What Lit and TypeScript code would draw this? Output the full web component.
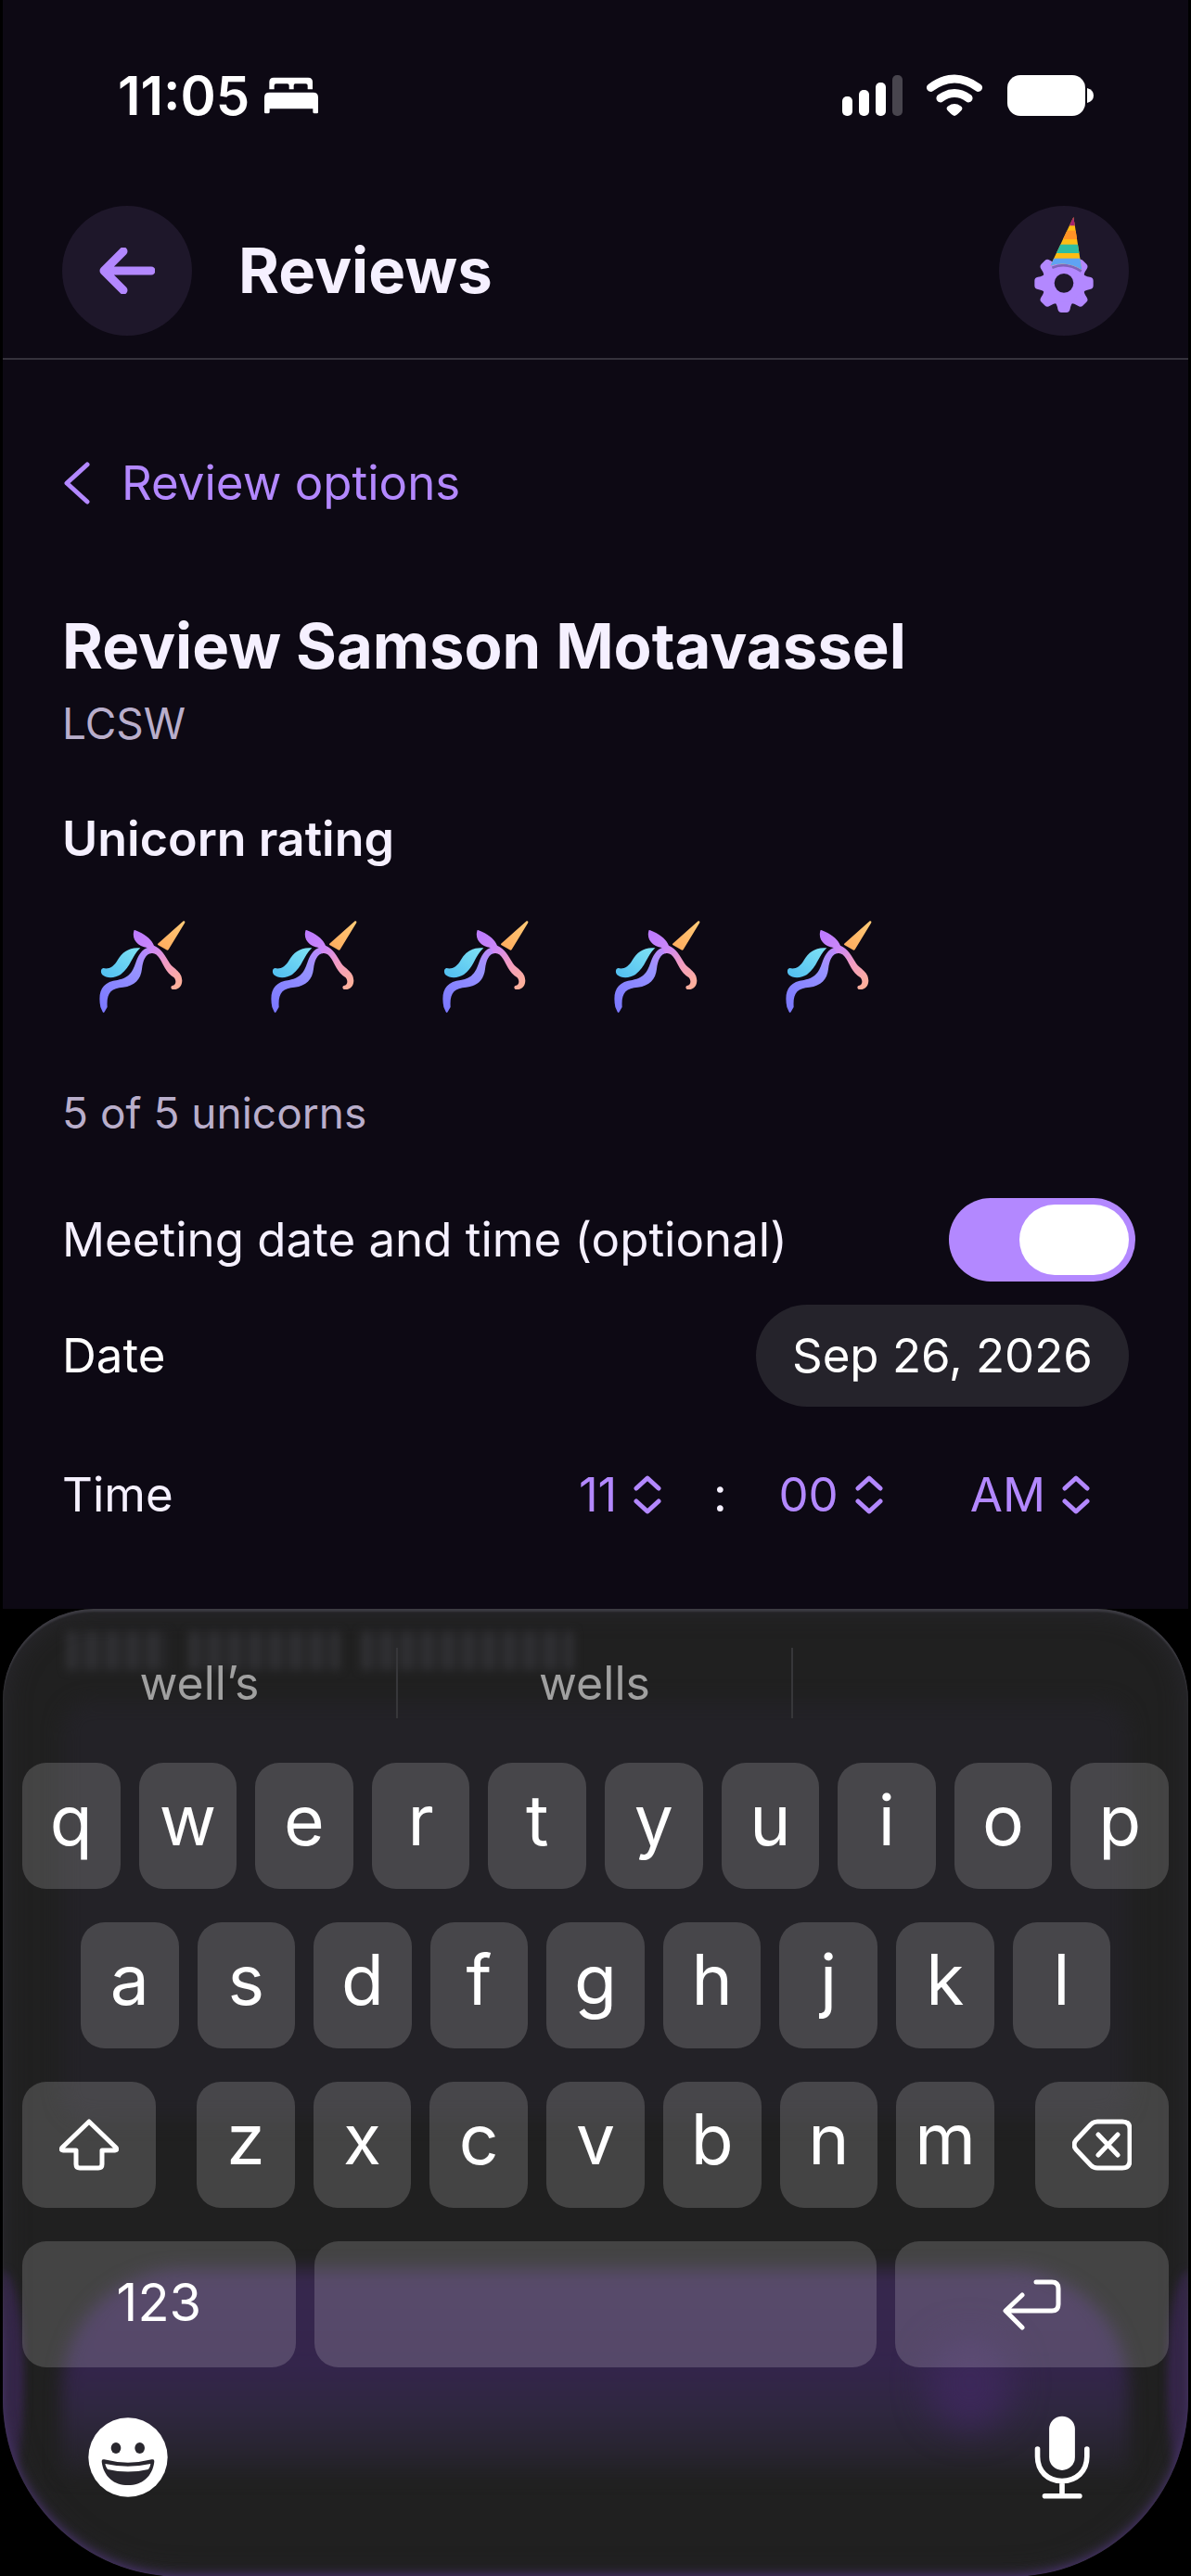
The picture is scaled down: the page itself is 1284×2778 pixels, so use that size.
import { LitElement, html, css, svg, nothing } from "lit";
import { customElement, state } from "lit/decorators.js";
import { classMap } from "lit/directives/class-map.js";

const TOP_ROW = [..."qwertyuiop"];
const HOME_ROW = [..."asdfghjkl"];
const BOTTOM_ROW = [..."zxcvbnm"];
const SUGGESTIONS = ["well’s", "wells", ""];
const TEETH = [0, 45, 90, 135, 180, 225, 270, 315];

const hours = Array.from({ length: 12 }, (_, i) => String(i + 1));
const minutes = Array.from({ length: 12 }, (_, i) => String(i * 5).padStart(2, "0"));

const bedIcon = html`
  <svg class="bed" viewBox="0 0 174 120" aria-hidden="true">
    <path d="M16 40V16Q16 2 30 2H142Q156 2 156 16V40H140V28Q140 22 134 22H100Q95 22 95 28V40H80V28Q80 22 74 22H38Q32 22 32 28V40Z" />
    <path d="M0 114V66Q0 50 16 50H158Q174 50 174 66V114Q174 118 170 118H162Q157 118 157 113V103H17V113Q17 118 12 118H4Q0 118 0 114Z" />
  </svg>
`;

const signalIcon = html`
  <svg class="signal" viewBox="0 0 66 46" role="img" aria-label="Signal">
    <rect x="0" y="24" width="11" height="21" rx="5" />
    <rect x="18" y="17" width="11" height="28" rx="5" />
    <rect x="36" y="9" width="11" height="36" rx="5" />
    <rect class="dim" x="54" y="1" width="11" height="44" rx="5" />
  </svg>
`;

const wifiIcon = html`
  <svg class="wifi" viewBox="324 60 186 140" role="img" aria-label="Wi-Fi">
    <path class="arc" d="M339 104Q417 46 495 104" />
    <path class="arc" d="M371 139Q417 106 463 139" />
    <path d="M417 197Q411 197 394 179Q388 170 396 165Q417 150 438 165Q446 170 440 179Q423 197 417 197Z" />
  </svg>
`;

const batteryIcon = html`
  <svg class="battery" viewBox="0 0 93 44" role="img" aria-label="Battery full">
    <rect width="84" height="44" rx="14" />
    <path d="M86 14Q93 16 93 22T86 30Z" />
  </svg>
`;

const gearIcon = html`
  <svg class="gear" viewBox="52 36 420 420" aria-hidden="true">
    <defs>
      <clipPath id="hat"><path d="M293 72L218 230Q272 212 320 243Z" /></clipPath>
    </defs>
    <g class="cog" transform="translate(262 286)">
      <path fill-rule="evenodd" d="M0-70A70 70 0 1 1 0 70A70 70 0 1 1 0-70ZM0-31A31 31 0 1 0 0 31A31 31 0 1 0 0-31Z" />
      ${TEETH.map(
        (a) => svg`<path transform="rotate(${a})" d="M-32-60Q-23-66-20-84Q-18-95-8-95H8Q18-95 20-84Q23-66 32-60Z" />`,
      )}
    </g>
    <path class="hat-shade" d="M224 236Q272 216 318 248" />
    <g clip-path="url(#hat)">
      <rect x="210" y="60" width="120" height="190" fill="#ffbc14" />
      <rect x="210" y="60" width="120" height="40" fill="#a5236e" />
      <rect x="210" y="116" width="120" height="28" fill="#ff9326" />
      <rect x="210" y="161" width="120" height="28" fill="#2ebda0" />
      <rect x="210" y="206" width="120" height="44" fill="#5fa3f3" />
    </g>
  </svg>
`;

const unicornIcon = html`
  <svg class="unicorn" viewBox="80 60 288 309" aria-hidden="true">
    <defs>
      <linearGradient id="u-horn" x1="0" y1="1" x2="1" y2="0">
        <stop offset="0" stop-color="#ffa95c" />
        <stop offset="1" stop-color="#ffcb77" />
      </linearGradient>
      <linearGradient id="u-face" gradientUnits="userSpaceOnUse" x1="205" y1="110" x2="345" y2="275">
        <stop offset="0" stop-color="#bd7bff" />
        <stop offset="0.3" stop-color="#cb88f8" />
        <stop offset="0.6" stop-color="#f19bc4" />
        <stop offset="1" stop-color="#ffb199" />
      </linearGradient>
      <linearGradient id="u-neck" gradientUnits="userSpaceOnUse" x1="100" y1="360" x2="255" y2="150">
        <stop offset="0" stop-color="#7b78ff" />
        <stop offset="0.65" stop-color="#9793ff" />
        <stop offset="1" stop-color="#c486fa" />
      </linearGradient>
      <linearGradient id="u-mane" x1="0" y1="1" x2="1" y2="0">
        <stop offset="0" stop-color="#50bdf0" />
        <stop offset="1" stop-color="#80e3f4" />
      </linearGradient>
    </defs>
    <path fill="url(#u-horn)" d="M355 67Q361 65 360 72L307 159Q304 163 299 159L274 145Q269 142 275 138Z" />
    <path fill="url(#u-mane)" d="M216 154C180 150 157 168 143 192C130 216 112 224 96 219C87 221 87 234 93 241C107 253 134 252 152 240C187 214 186 182 216 154Z" />
    <path fill="url(#u-neck)" d="M262 150C226 148 212 172 203 196C192 228 184 250 142 258C93 263 77 294 87 345L94 361Q97 366 100 361L109 345C106 300 120 284 160 281C198 277 217 256 221 222C224 196 232 170 256 170Z" />
    <path fill="url(#u-face)" d="M195 99Q195 95 200 97C232 110 250 124 260 146C284 156 296 178 308 199C319 221 351 228 351 260C350 280 337 289 323 288C314 288 313 279 319 276C332 274 333 260 325 250C297 232 290 206 279 189C270 174 260 168 248 172L238 153C210 150 187 128 195 99Z" />
  </svg>
`;

const chevrons = html`
  <svg class="chevrons" viewBox="0 0 30 42" aria-hidden="true">
    <path d="M3 14L15 3L27 14M3 28L15 39L27 28" />
  </svg>
`;

@customElement("app-root")
export class AppRoot extends LitElement {
  @state() private rating = 5;
  @state() private hasMeeting = true;

  private renderSelect(name: string, options: string[], selected: string) {
    return html`
      <span class="picker">
        <select aria-label=${name}>
          ${options.map((o) => html`<option ?selected=${o === selected}>${o}</option>`)}
        </select>
        ${chevrons}
      </span>
    `;
  }

  private renderKeys(keys: string[]) {
    return keys.map((k) => html`<button type="button" class="key">${k}</button>`);
  }

  private renderStatusBar() {
    return html`
      <div class="status">
        <span class="clock">11:05</span>
        ${bedIcon}
        <span class="spacer"></span>
        ${signalIcon} ${wifiIcon} ${batteryIcon}
      </div>
    `;
  }

  private renderHeader() {
    return html`
      <header class="header">
        <button type="button" class="round" aria-label="Back">
          <svg class="arrow" viewBox="0 0 60 50" aria-hidden="true">
            <path d="M56 25H6M26 4L5 25L26 46" />
          </svg>
        </button>
        <h1 class="title">Reviews</h1>
        <button type="button" class="round" aria-label="Settings">${gearIcon}</button>
      </header>
    `;
  }

  private renderForm() {
    return html`
      <main class="content">
        <button type="button" class="back-link">
          <svg class="chevron" viewBox="0 0 30 46" aria-hidden="true"><path d="M27 3L5 23L27 43" /></svg>
          Review options
        </button>
        <h2 class="name">Review Samson Motavassel</h2>
        <p class="muted credential">LCSW</p>
        <h3 class="label" id="rating-label">Unicorn rating</h3>
        <div class="rating" role="group" aria-labelledby="rating-label">
          ${[1, 2, 3, 4, 5].map(
            (n) => html`
              <button
                type="button"
                class=${classMap({ rate: true, off: n > this.rating })}
                aria-label=${`${n} unicorns`}
                @click=${() => (this.rating = n)}
              >
                ${unicornIcon}
              </button>
            `,
          )}
        </div>
        <p class="muted">${this.rating} of 5 unicorns</p>
        <div class="row toggle-row">
          <label for="meeting">Meeting date and time (optional)</label>
          <input
            id="meeting"
            class="switch"
            type="checkbox"
            role="switch"
            .checked=${this.hasMeeting}
            @change=${(e: Event) => (this.hasMeeting = (e.target as HTMLInputElement).checked)}
          />
        </div>
        ${this.hasMeeting
          ? html`
              <div class="row date-row">
                <span id="date-label">Date</span>
                <button type="button" class="date" aria-describedby="date-label">Sep 26, 2026</button>
              </div>
              <div class="row time-row">
                <span>Time</span>
                <div class="time" role="group" aria-label="Time">
                  ${this.renderSelect("Hour", hours, "11")}
                  <span class="colon">:</span>
                  ${this.renderSelect("Minute", minutes, "00")}
                  <span class="period">${this.renderSelect("AM or PM", ["AM", "PM"], "AM")}</span>
                </div>
              </div>
            `
          : nothing}
      </main>
    `;
  }

  private renderKeyboard() {
    return html`
      <section class="keyboard" aria-label="Keyboard">
        <div class="backdrop" aria-hidden="true">
          <div class="ghost-label">
            <span class="smudge wide"></span>
            <span class="smudge wider"></span>
            <span class="smudge widest"></span>
          </div>
          <div class="ghost-field"></div>
          <div class="ghost-bar"></div>
          <div class="ghost-tab"></div>
          <div class="glow left"></div>
          <div class="glow right"></div>
          <div class="rim"></div>
        </div>
        <div class="suggestions">
          ${SUGGESTIONS.map((s) => html`<button type="button" class="suggestion" ?disabled=${!s}>${s}</button>`)}
        </div>
        <div class="keys">
          <div class="key-row">${this.renderKeys(TOP_ROW)}</div>
          <div class="key-row home">${this.renderKeys(HOME_ROW)}</div>
          <div class="key-row bottom">
            <button type="button" class="key icon side" aria-label="Shift">
              <svg class="key-icon" viewBox="0 0 64 56" aria-hidden="true">
                <path d="M32 3L61 31Q63 34 60 34H46V49Q46 53 42 53H22Q18 53 18 49V34H4Q1 34 3 31Z" />
              </svg>
            </button>
            <div class="letters">${this.renderKeys(BOTTOM_ROW)}</div>
            <button type="button" class="key icon side" aria-label="Delete">
              <svg class="key-icon" viewBox="0 0 64 56" aria-hidden="true">
                <path d="M27 3H54Q62 3 62 11V45Q62 53 54 53H27Q23 53 20 50L4 33Q0 28 4 23L20 6Q23 3 27 3ZM28 17L49 39M49 17L28 39" />
              </svg>
            </button>
          </div>
          <div class="key-row space-row">
            <button type="button" class="key numbers">123</button>
            <button type="button" class="key" aria-label="Space"></button>
            <button type="button" class="key icon" aria-label="Return">
              <svg class="key-icon" viewBox="0 0 64 56" aria-hidden="true">
                <path d="M36 4H53Q60 4 60 11V28Q60 35 53 35H4M21 18L3 35L21 53" />
              </svg>
            </button>
          </div>
        </div>
        <div class="dock">
          <button type="button" class="plain" aria-label="Emoji">
            <svg class="emoji" viewBox="286 1103 258 258" aria-hidden="true">
              <circle cx="415" cy="1232" r="128" fill="#fff" />
              <ellipse cx="376" cy="1202" rx="16" ry="18" />
              <ellipse cx="453" cy="1202" rx="16" ry="18" />
              <path d="M330 1246Q329 1237 338 1239Q415 1259 492 1239Q501 1237 500 1246C494 1295 460 1322 415 1322S336 1295 330 1246Z" />
              <path fill="#fff" d="M341 1253Q415 1269 488 1253Q487 1264 481 1271Q415 1286 349 1271Q343 1264 341 1253Z" />
            </svg>
          </button>
          <button type="button" class="plain" aria-label="Dictate">
            <svg class="mic" viewBox="226 546 180 272" aria-hidden="true">
              <rect class="capsule" x="274" y="548" width="84" height="176" rx="42" />
              <path d="M236 655V680C236 728 270 759 316 759S397 728 397 680V655M316 759V808M260 808H373" />
            </svg>
          </button>
        </div>
      </section>
    `;
  }

  render() {
    return html`${this.renderStatusBar()} ${this.renderHeader()} ${this.renderForm()} ${this.renderKeyboard()}`;
  }

  static styles = css`
    :host {
      --accent: #b388ff;
      --text: #f5f0ff;
      --muted: #b9aecb;
      --surface: #0d0914;
      display: flex;
      flex-direction: column;
      min-height: 100vh;
      box-sizing: border-box;
      padding: 0 3px;
      background: #000;
      color: var(--text);
      font-family: Inter, "Liberation Sans", sans-serif;
      font-size: 51px;
      line-height: 64px;
    }

    * {
      box-sizing: border-box;
    }

    h1,
    h2,
    h3,
    p {
      margin: 0;
    }

    button,
    select {
      border: none;
      padding: 0;
      background: none;
      color: inherit;
      font: inherit;
      cursor: pointer;
    }

    svg {
      display: block;
      flex-shrink: 0;
    }

    .status {
      display: flex;
      align-items: center;
      height: 206px;
      padding: 0 102px 0 124px;
      background: var(--surface);
      color: #fff;
      fill: #fff;
    }

    .clock {
      font-size: 58px;
      font-weight: 600;
    }

    .spacer {
      flex: 1;
    }

    .bed {
      width: 58px;
      height: 40px;
      margin-left: 16px;
    }

    .signal {
      width: 66px;
      height: 46px;
    }

    .dim {
      fill: #48454e;
    }

    .wifi {
      width: 62px;
      height: 46px;
      margin: 0 26px 0 24px;
    }

    .arc {
      fill: none;
      stroke: #fff;
      stroke-width: 27;
      stroke-linecap: round;
    }

    .battery {
      width: 93px;
      height: 44px;
    }

    .header {
      display: flex;
      align-items: center;
      padding: 16px 64px 24px;
      border-bottom: 2px solid #35323c;
      background: var(--surface);
    }

    .round {
      display: grid;
      place-items: center;
      width: 140px;
      height: 140px;
      border-radius: 50%;
      background: #1e172a;
    }

    .arrow {
      width: 60px;
      height: 50px;
      fill: none;
      stroke: var(--accent);
      stroke-width: 9;
      stroke-linecap: round;
      stroke-linejoin: round;
    }

    .title,
    .name {
      font-size: 67px;
      font-weight: 700;
      line-height: 84px;
    }

    .title {
      flex: 1;
      margin-left: 50px;
    }

    .gear {
      width: 140px;
      height: 140px;
    }

    .cog {
      fill: var(--accent);
    }

    .hat-shade {
      fill: none;
      stroke: #5c4a8c;
      stroke-width: 8;
      opacity: 0.6;
    }

    .content {
      display: flex;
      flex: 1;
      flex-direction: column;
      align-items: stretch;
      padding: 101px 57px 68px 64px;
      background: var(--surface);
    }

    .back-link {
      display: flex;
      align-items: center;
      align-self: flex-start;
      gap: 34px;
      color: var(--accent);
    }

    .chevron {
      width: 30px;
      height: 46px;
      fill: none;
      stroke: var(--accent);
      stroke-width: 5;
      stroke-linecap: round;
      stroke-linejoin: round;
    }

    .name {
      margin-top: 102px;
    }

    .muted {
      color: var(--muted);
      font-size: 46px;
      line-height: 60px;
    }

    .credential {
      margin: 11px 0 63px;
    }

    .label {
      font-size: 52px;
      font-weight: 600;
    }

    .rating {
      display: flex;
      gap: 11px;
      margin: 40px 0 63px;
    }

    .rate {
      display: grid;
      place-items: center;
      width: 174px;
      height: 130px;
    }

    .off {
      opacity: 0.3;
    }

    .unicorn {
      width: 96px;
      height: 103px;
    }

    .row {
      display: flex;
      align-items: center;
      justify-content: space-between;
    }

    .toggle-row {
      margin-top: 62px;
    }

    .switch {
      appearance: none;
      width: 201px;
      height: 90px;
      margin: 0;
      padding: 7px;
      border-radius: 45px;
      background: #39363f;
      cursor: pointer;
    }

    .switch::before {
      content: "";
      display: block;
      width: 118px;
      height: 76px;
      border-radius: 38px;
      background: #fff;
    }

    .switch:checked {
      background: var(--accent);
    }

    .switch:checked::before {
      margin-left: auto;
    }

    .date-row {
      margin-top: 25px;
      padding-right: 7px;
      color: #fff;
    }

    .date {
      height: 110px;
      padding: 0 39px;
      border-radius: 55px;
      background: #25232b;
    }

    .time-row {
      height: 110px;
      margin-top: 40px;
      padding-right: 49px;
    }

    .time {
      display: flex;
      align-items: center;
    }

    .picker {
      display: flex;
      align-items: center;
      gap: 18px;
      color: var(--accent);
    }

    .picker select {
      appearance: none;
      field-sizing: content;
      height: 64px;
    }

    .chevrons {
      width: 30px;
      height: 42px;
      fill: none;
      stroke: var(--accent);
      stroke-width: 5;
      stroke-linecap: round;
      stroke-linejoin: round;
    }

    .colon {
      width: 126px;
      text-align: center;
    }

    .period {
      margin-left: 94px;
    }

    .keyboard {
      position: relative;
      display: flex;
      flex-direction: column;
      color: #fff;
    }

    .backdrop {
      position: absolute;
      inset: 0;
      overflow: hidden;
      border-radius: 98px 98px 192px 192px;
      background: #202020;
    }

    .backdrop > * {
      position: absolute;
    }

    .ghost-label {
      display: flex;
      gap: 22px;
      top: 24px;
      left: 68px;
      filter: blur(5px);
    }

    .smudge {
      height: 42px;
      background: repeating-linear-gradient(90deg, #303033 0 12px, #262628 12px 22px);
    }

    .wide {
      width: 110px;
    }

    .wider {
      width: 164px;
    }

    .widest {
      width: 230px;
    }

    .ghost-field {
      top: 100px;
      left: 64px;
      right: 64px;
      height: 450px;
      border-radius: 30px;
      background: #232227;
      filter: blur(10px);
    }

    .ghost-bar {
      left: 64px;
      right: 64px;
      bottom: 110px;
      height: 222px;
      border-radius: 130px 130px 0 0;
      background: linear-gradient(#37284d 0%, #34244c 45%, #2f2740 68%, #232226 100%);
      filter: blur(9px);
    }

    .ghost-tab {
      right: 190px;
      bottom: 160px;
      width: 90px;
      height: 100px;
      border-radius: 45px;
      background: #3c2859;
      filter: blur(18px);
    }

    .glow {
      bottom: 90px;
      width: 44px;
      height: 240px;
      border-radius: 50%;
      background: #38264f;
      filter: blur(5px);
    }

    .left {
      left: -22px;
    }

    .right {
      right: -22px;
    }

    .rim {
      inset: 0;
      border-radius: inherit;
      box-shadow:
        inset 0 3px 2px #3c3b42,
        inset 0 0 28px #2b2a30;
    }

    .rim::after {
      content: "";
      position: absolute;
      inset: 0;
      border-radius: inherit;
      box-shadow: inset 0 -2px 12px #4a3370;
      mask-image: linear-gradient(transparent 68%, #000 76%);
    }

    .suggestions,
    .keys,
    .dock {
      position: relative;
    }

    .suggestions {
      display: grid;
      grid-template-columns: repeat(3, 1fr);
      align-items: center;
      height: 160px;
    }

    .suggestion {
      height: 76px;
      border-right: 2px solid #37373a;
      color: #a0a0a0;
      font-size: 50px;
    }

    .suggestion:last-child {
      border-right: none;
    }

    .keys {
      display: flex;
      flex-direction: column;
      gap: 36px;
      padding: 6px 21px 0;
    }

    .key-row,
    .letters {
      display: flex;
      gap: 20px;
    }

    .home {
      padding: 0 63px;
    }

    .bottom {
      gap: 44px;
    }

    .letters {
      flex: 1;
    }

    .space-row {
      display: grid;
      grid-template-columns: 295fr 607fr 295fr;
    }

    .key {
      display: flex;
      flex: 1 1 0;
      align-items: center;
      justify-content: center;
      min-width: 0;
      height: 136px;
      padding-bottom: 12px;
      border-radius: 26px;
      background: rgba(255, 255, 255, 0.165);
      font-size: 75px;
    }

    .icon {
      padding-bottom: 0;
    }

    .side {
      flex: 0 0 144px;
    }

    .numbers {
      padding-bottom: 4px;
      font-size: 56px;
    }

    .key-icon {
      width: 64px;
      height: 56px;
      fill: none;
      stroke: #fff;
      stroke-width: 5;
      stroke-linecap: round;
      stroke-linejoin: round;
    }

    .dock {
      display: flex;
      align-items: center;
      justify-content: space-between;
      padding: 52px 106px 84px 92px;
    }

    .plain {
      display: grid;
      place-items: center;
    }

    .emoji {
      width: 86px;
      height: 86px;
      fill: #29272e;
    }

    .mic {
      width: 60px;
      height: 90px;
      fill: none;
      stroke: #fff;
      stroke-width: 17;
      stroke-linecap: round;
    }

    .capsule {
      fill: #fff;
      stroke: none;
    }
  `;
}
